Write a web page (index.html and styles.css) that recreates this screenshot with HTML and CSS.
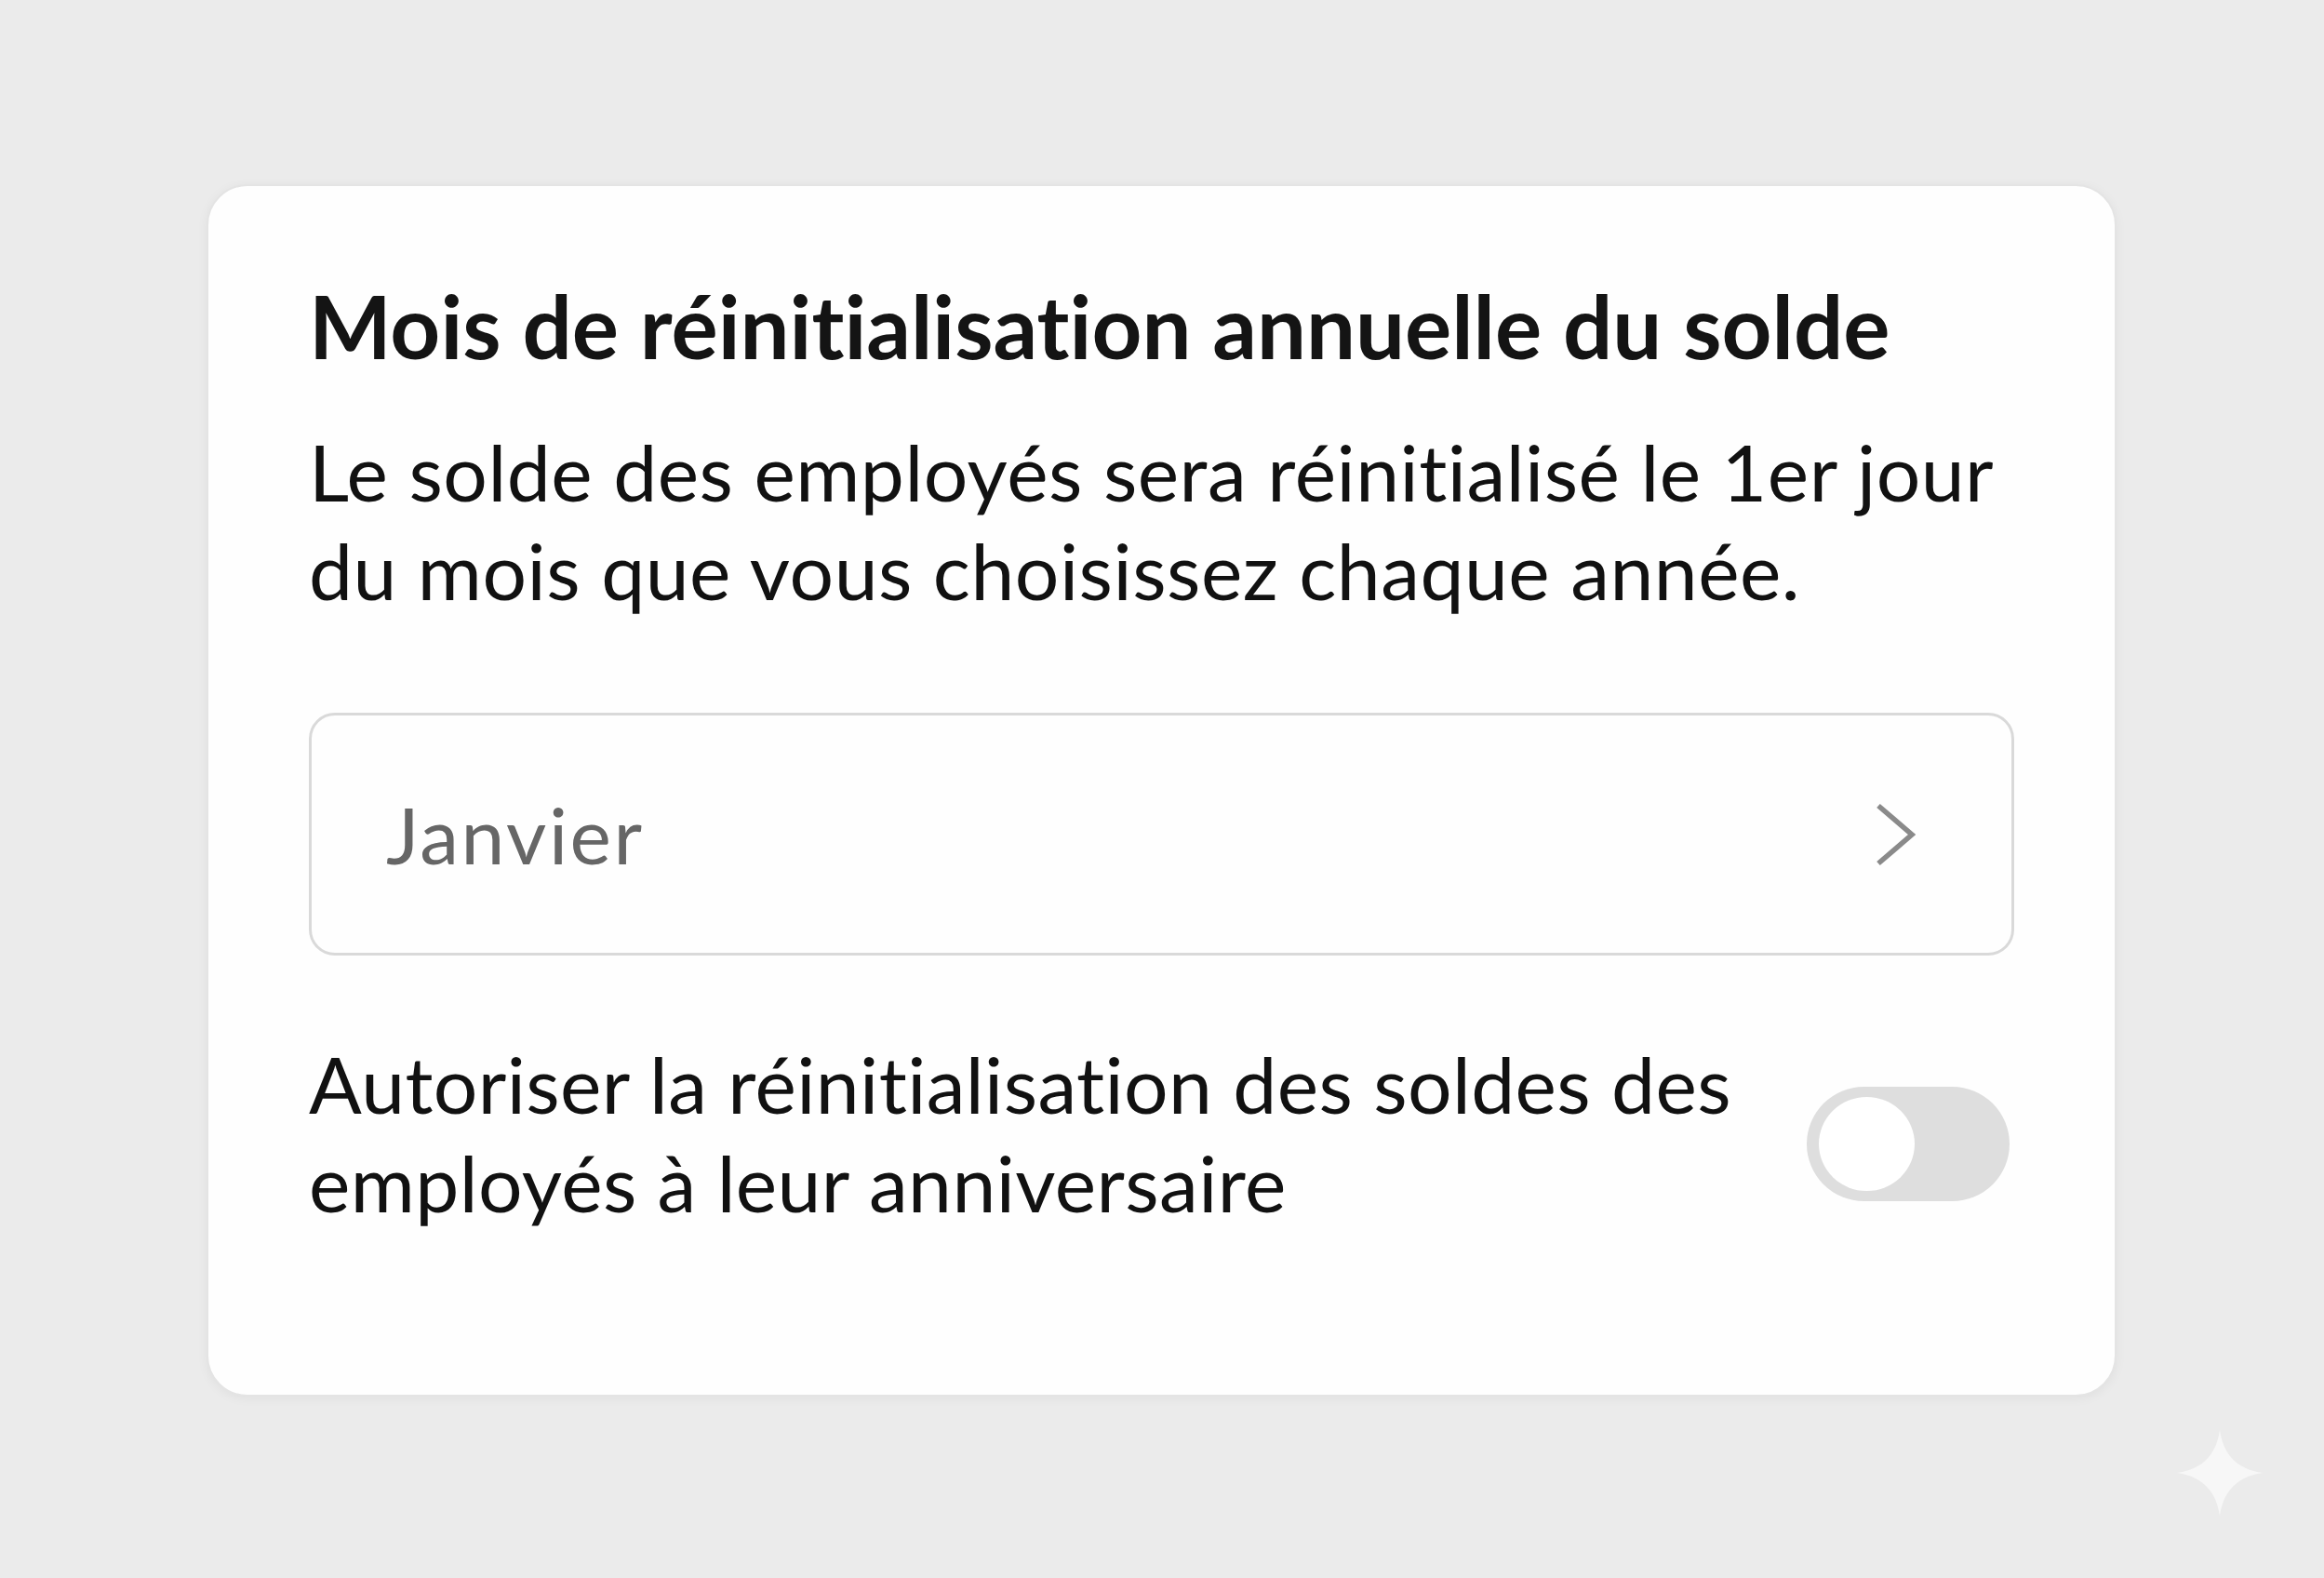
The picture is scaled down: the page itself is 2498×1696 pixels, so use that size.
FILE: index.html
```html
<!DOCTYPE html>
<html lang="fr">
<head>
  <meta charset="UTF-8">
  <meta name="viewport" content="width=device-width, initial-scale=1.0">
  <title>Réinitialisation du solde</title>
  <link rel="stylesheet" href="styles.css">
</head>
<body>
  <div class="settingsCard">
    <h2 class="cardTitle">Mois de réinitialisation annuelle du solde</h2>
    <p class="cardText">Le solde des employés sera réinitialisé le 1er jour du mois que vous choisissez chaque année.</p>

    <div class="monthSelect">
      <span class="monthValue">Janvier</span>
      <svg class="chevron" width="44" height="70" viewBox="0 0 44 70">
        <path d="M4 4 L40 35 L4 66" fill="none" stroke="#8a8a8a" stroke-width="5.5"/>
      </svg>
    </div>

    <div class="toggleRow">
      <div class="toggleLabel">Autoriser la réinitialisation des soldes des employés à leur anniversaire</div>
      <span class="switch"><span class="knob"></span></span>
    </div>
  </div>

  <svg class="sparkle" width="96" height="96" viewBox="0 0 100 100">
    <path d="M50 2 C54 30 70 46 98 50 C70 54 54 70 50 98 C46 70 30 54 2 50 C30 46 46 30 50 2 Z" fill="#f7f7f7"/>
  </svg>
</body>
</html>
```

FILE: styles.css
```css
body{margin: 0; background: #ebebeb; font-family: Lato, "Noto Sans", sans-serif; font-variant-ligatures: none; color: #111; padding: 198px 0 0 222px; min-height: 1696px; box-sizing: border-box;}

.settingsCard{
  width: 2053px;
  box-sizing: border-box;
  background: #fefefe;
  border: 2px solid #e4e4e4;
  border-radius: 44px;
  box-shadow: 0 2px 12px rgba(0,0,0,0.05);
  padding: 93px 108px 175px 108px;
}

.cardTitle{
  margin: 0;
  font-size: 94px;
  line-height: 114px;
  font-weight: 700;
  color: #141414;
}

.cardText{
  margin: 47px 0 0;
  font-size: 84px;
  line-height: 106px;
  font-weight: 400;
  letter-spacing: 0.5px;
}

.monthSelect{
  margin-top: 100px;
  height: 261px;
  box-sizing: border-box;
  border: 3px solid #d9d9d9;
  border-radius: 28px;
  display: flex;
  align-items: center;
  justify-content: space-between;
  padding: 0 103px 0 80px;
}
.monthValue{font-size: 84px; color: #666; letter-spacing: 2.5px;}
.chevron{display: block;}

.toggleRow{
  margin-top: 85px;
  display: flex;
  align-items: flex-start;
  justify-content: space-between;
}
.toggleLabel{
  max-width: 1580px;
  font-size: 84px;
  line-height: 106px;
  letter-spacing: 0.4px;
}
.switch{
  flex: none;
  margin: 56px 5px 0 0;
  width: 218px;
  height: 123px;
  border-radius: 62px;
  background: #dedede;
  display: flex;
  align-items: center;
  padding-left: 13px;
  box-sizing: border-box;
}
.knob{width: 103px; height: 101px; border-radius: 50%; background: #fff;}

.sparkle{position: absolute; left: 2338px; top: 1535px;}
```
